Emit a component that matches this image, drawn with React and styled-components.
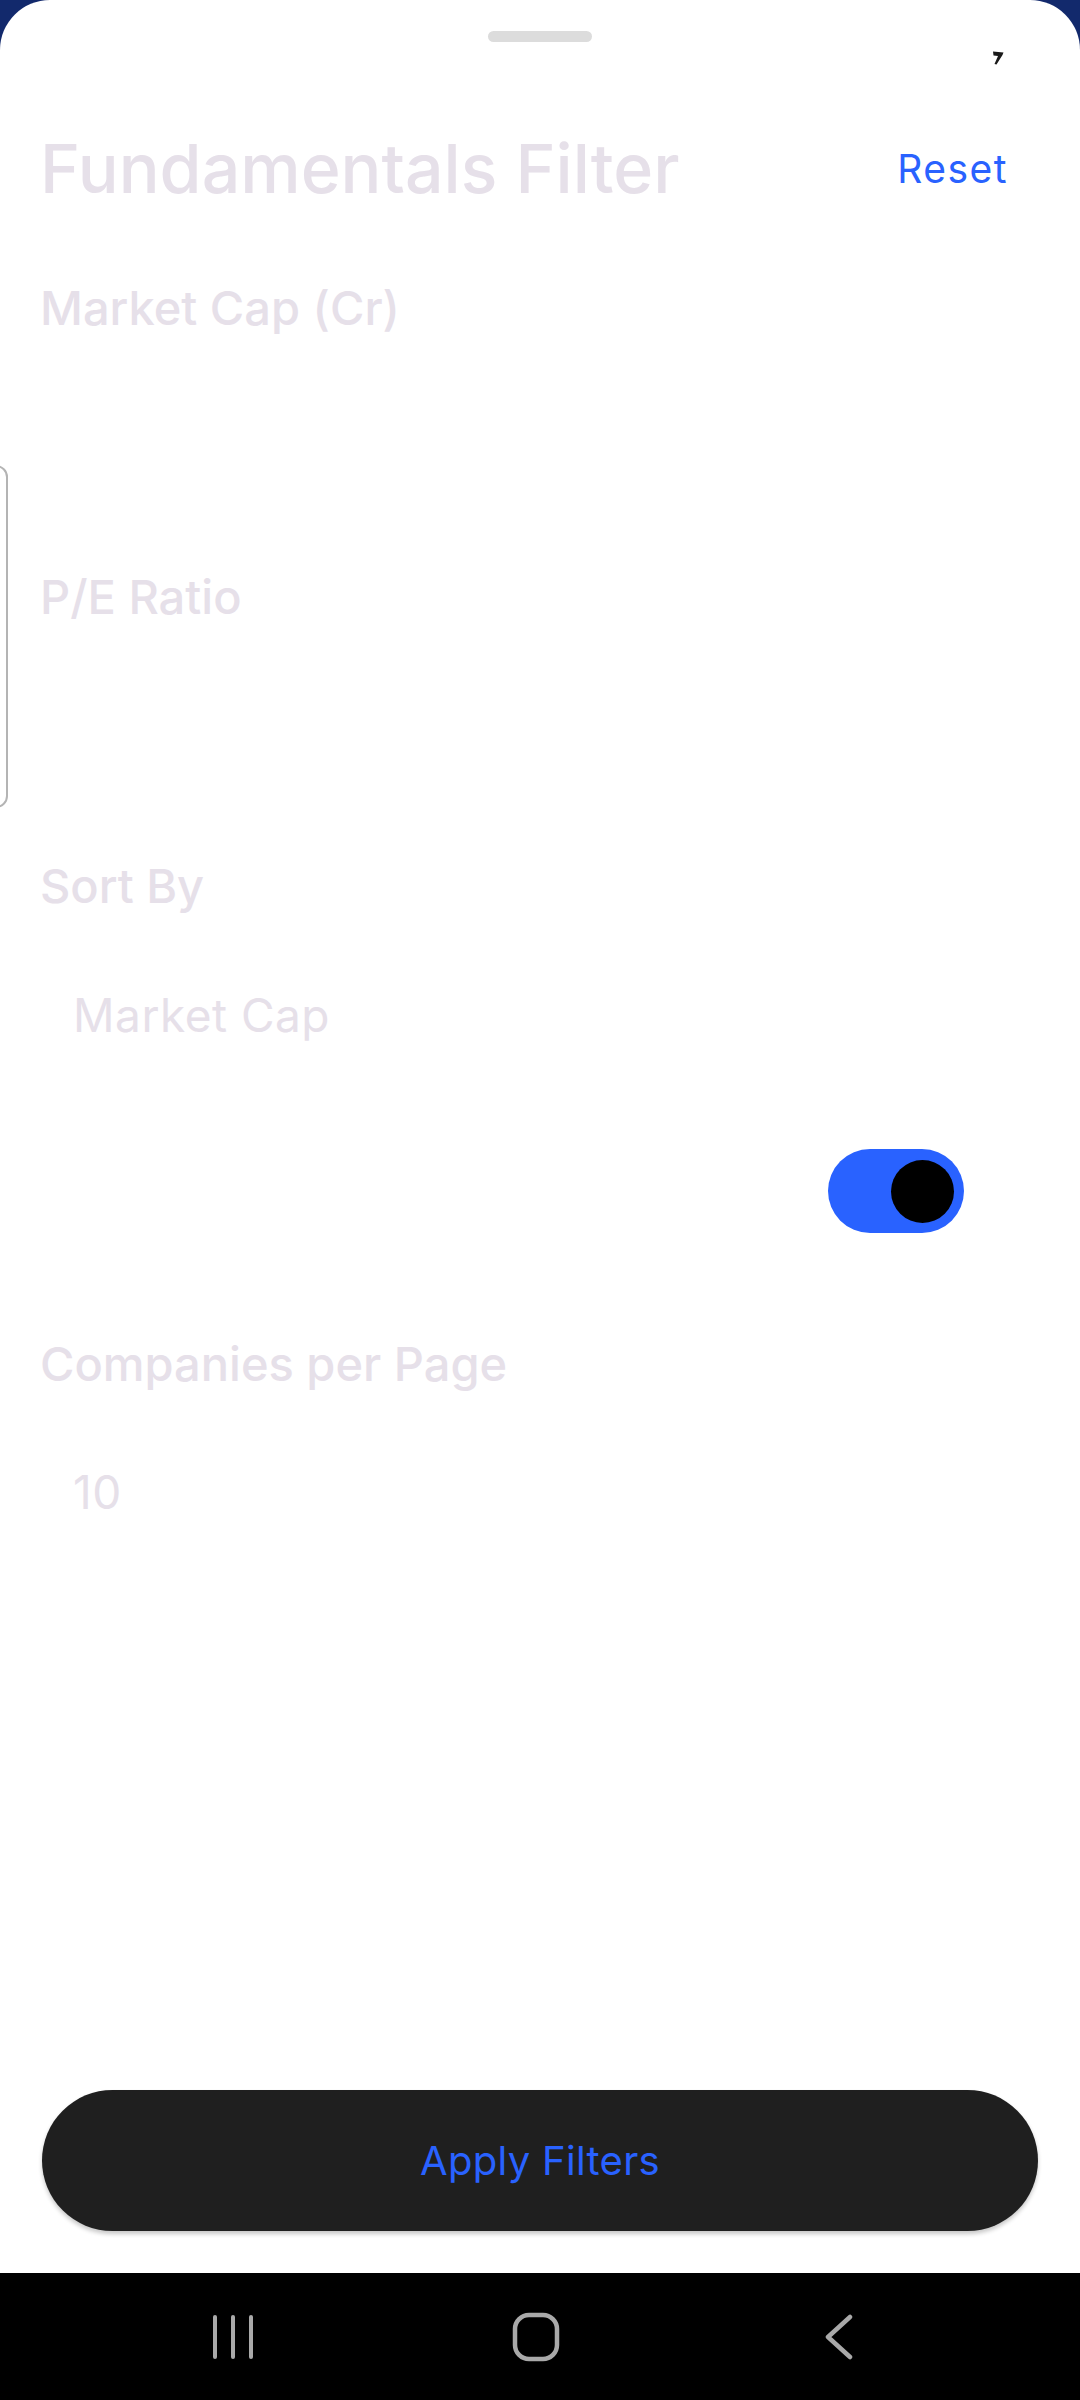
import React from "react";
import styled, { createGlobalStyle } from "styled-components";

const Global = createGlobalStyle`
  html, body { margin: 0; padding: 0; background: #12296c; }
  body { font-family: Inter, Roboto, "Liberation Sans", sans-serif; }
  * { box-sizing: border-box; }
`;

const Screen = styled.div`
  width: 1080px;
  height: 2400px;
  display: flex;
  flex-direction: column;
  background: #12296c;
`;

const Sheet = styled.div`
  position: relative;
  flex: 1;
  background: #ffffff;
  border-radius: 50px 50px 0 0;
  display: flex;
  flex-direction: column;
  overflow: hidden;
`;

const HandleRow = styled.div`
  display: flex;
  justify-content: center;
  padding-top: 31px;
`;

const Handle = styled.div`
  width: 104px;
  height: 11px;
  border-radius: 6px;
  background: #dcdcdc;
`;

const Speck = styled.svg`
  position: absolute;
  left: 992px;
  top: 51px;
`;

const OffscreenField = styled.div`
  position: absolute;
  left: -100px;
  top: 465px;
  width: 108px;
  height: 343px;
  border: 2px solid #b4b4b4;
  border-radius: 12px;
`;

const Header = styled.div`
  display: flex;
  align-items: center;
  justify-content: space-between;
  margin-top: 92px;
  padding: 0 42px 0 40px;
`;

const Title = styled.h1`
  margin: 0;
  font-size: 68px;
  line-height: 68px;
  font-weight: 500;
  color: #e6e0e9;
`;

const TextButton = styled.button`
  border: none;
  background: none;
  padding: 0 30px 0 31px;
  font-family: inherit;
  font-size: 39px;
  line-height: 39px;
  letter-spacing: 1.5px;
  font-weight: 400;
  color: #2962ff;
`;

const Label = styled.div`
  margin-top: ${(p) => p.$gap}px;
  padding-left: 40px;
  font-size: 47px;
  line-height: 47px;
  font-weight: 500;
  color: #e6e0e9;
`;

const Value = styled.div`
  margin-top: ${(p) => p.$gap}px;
  padding-left: 73px;
  font-size: 46px;
  line-height: 46px;
  letter-spacing: 0.5px;
  font-weight: 400;
  color: #e6e0e9;
`;

const SwitchRow = styled.div`
  display: flex;
  justify-content: flex-end;
  margin-top: 111px;
  padding-right: 116px;
`;

const Track = styled.div`
  width: 136px;
  height: 84px;
  border-radius: 42px;
  background: #2962ff;
  display: flex;
  align-items: center;
  justify-content: flex-end;
  padding-right: 10px;
`;

const Thumb = styled.div`
  width: 63px;
  height: 63px;
  border-radius: 50%;
  background: #000000;
`;

const Footer = styled.div`
  margin-top: auto;
  padding: 0 42px 42px;
`;

const ApplyButton = styled.button`
  width: 100%;
  height: 141px;
  border: none;
  border-radius: 71px;
  background: #1f1f1f;
  box-shadow: 0 3px 4px rgba(0, 0, 0, 0.22);
  font-family: inherit;
  font-size: 40px;
  letter-spacing: 0.3px;
  font-weight: 400;
  color: #2962ff;
`;

const NavBar = styled.div`
  height: 127px;
  background: #000000;
  display: flex;
  align-items: center;
  justify-content: center;
  padding-right: 8px;
`;

const NavSlot = styled.div`
  width: 303px;
  display: flex;
  justify-content: center;
  align-items: center;
`;

export default function App() {
  return (
    <Screen>
      <Global />
      <Sheet>
        <HandleRow>
          <Handle />
        </HandleRow>
        <Speck width="12" height="14" viewBox="0 0 12 14">
          <path d="M1 0.5 L11.5 1.5 L10.5 4 L4.5 13.5 L2.5 13 L6 5 L1.5 4.5 Z" fill="#1a1a1a" />
        </Speck>
        <OffscreenField />
        <Header>
          <Title>Fundamentals Filter</Title>
          <TextButton>Reset</TextButton>
        </Header>
        <Label $gap={82}>Market Cap (Cr)</Label>
        <Label $gap={242}>P/E Ratio</Label>
        <Label $gap={242}>Sort By</Label>
        <Value $gap={83}>Market Cap</Value>
        <SwitchRow>
          <Track>
            <Thumb />
          </Track>
        </SwitchRow>
        <Label $gap={107}>Companies per Page</Label>
        <Value $gap={82}>10</Value>
        <Footer>
          <ApplyButton>Apply Filters</ApplyButton>
        </Footer>
      </Sheet>
      <NavBar>
        <NavSlot>
          <svg width="44" height="46" viewBox="0 0 44 46">
            <g stroke="#a9a9a9" strokeWidth="4" strokeLinecap="round">
              <line x1="4" y1="3" x2="4" y2="43" />
              <line x1="22" y1="3" x2="22" y2="43" />
              <line x1="40" y1="3" x2="40" y2="43" />
            </g>
          </svg>
        </NavSlot>
        <NavSlot>
          <svg width="48" height="50" viewBox="0 0 48 50">
            <rect x="3" y="3" width="42" height="44" rx="14" fill="none" stroke="#a9a9a9" strokeWidth="4.5" />
          </svg>
        </NavSlot>
        <NavSlot>
          <svg width="30" height="46" viewBox="0 0 30 46">
            <polyline points="26,3 4,23 26,43" fill="none" stroke="#a9a9a9" strokeWidth="4.5" strokeLinecap="round" strokeLinejoin="round" />
          </svg>
        </NavSlot>
      </NavBar>
    </Screen>
  );
}
